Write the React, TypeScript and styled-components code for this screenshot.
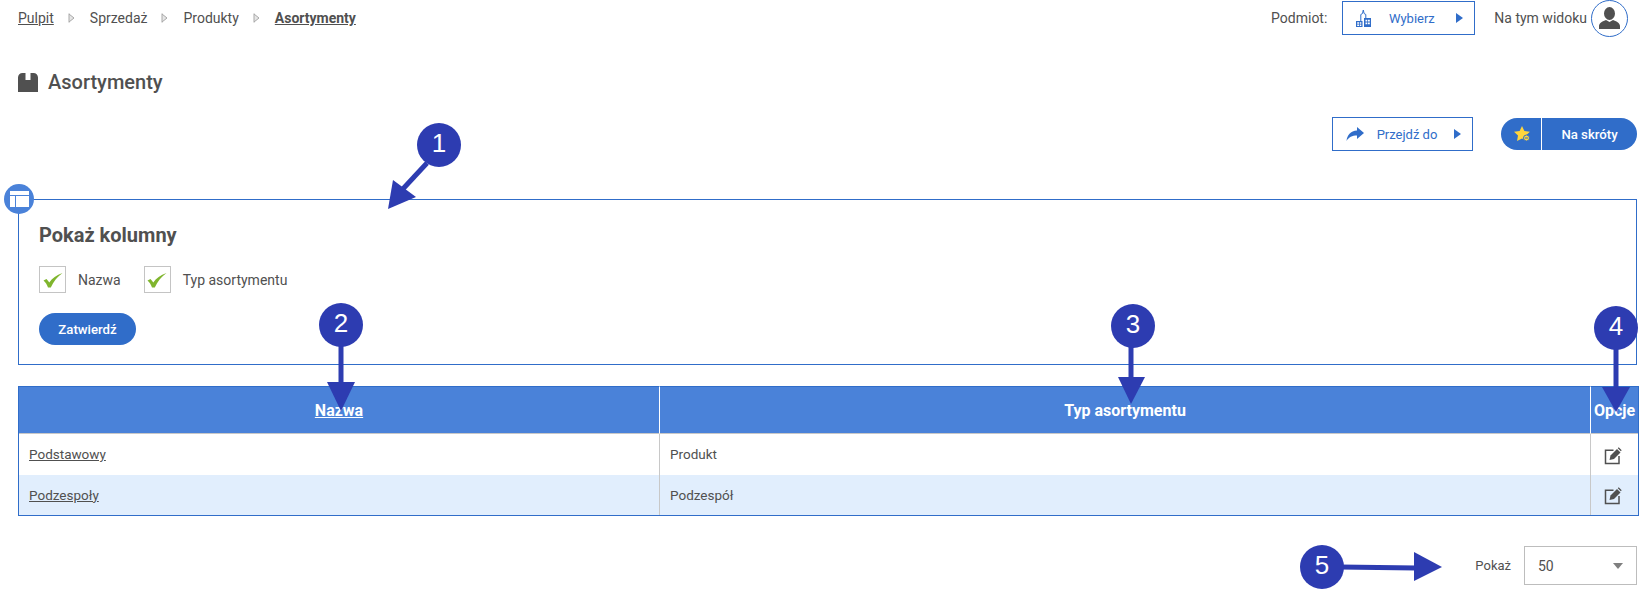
import React from "react";
import styled, { createGlobalStyle } from "styled-components";

const Global = createGlobalStyle`
  html, body { margin: 0; padding: 0; background: #fff; }
  body { font-family: Roboto, "Liberation Sans", sans-serif; color: #505050; font-size: 14px; }
  * { box-sizing: border-box; }
`;

const BLUE = "#306dc9";
const TEXT = "#505050";

const Page = styled.div`
  position: relative;
  width: 1648px;
  height: 595px;
  overflow: hidden;
  padding: 0 11px 0 18px;
`;

const TopBar = styled.header`
  display: flex;
  align-items: center;
  justify-content: space-between;
  height: 36px;
  padding-right: 9px;
`;

const Crumbs = styled.nav`
  display: flex;
  align-items: center;
`;

const CrumbLink = styled.a<{ $current?: boolean; $plain?: boolean }>`
  font-size: 14px;
  font-weight: ${(p) => (p.$current ? 700 : 400)};
  text-decoration: ${(p) => (p.$plain ? "none" : "underline")};
  color: ${TEXT};
`;

const CrumbSep = styled.svg`
  width: 7px;
  height: 10px;
  margin: 0 15px 0 14px;
`;

const TopRight = styled.div`
  display: flex;
  align-items: center;
`;

const TopLabel = styled.span<{ $gap: number }>`
  font-size: 14px;
  margin-right: ${(p) => p.$gap}px;
`;

const OutlineButton = styled.button<{ $w: number; $mr?: number }>`
  display: flex;
  align-items: center;
  width: ${(p) => p.$w}px;
  height: 34px;
  margin-right: ${(p) => p.$mr ?? 0}px;
  padding: 0 11px 0 13px;
  background: #fff;
  border: 1.5px solid ${BLUE};
  color: ${BLUE};
  font: 400 13px Roboto, sans-serif;
`;

const ButtonLabel = styled.span`
  flex: 1;
  padding-right: 4px;
  text-align: center;
  white-space: nowrap;
`;

const Avatar = styled.div`
  width: 37px;
  height: 37px;
  margin-left: 4px;
  border: 1px solid ${BLUE};
  border-radius: 50%;
  display: flex;
  align-items: center;
  justify-content: center;
`;

const TitleRow = styled.div`
  display: flex;
  align-items: center;
  gap: 10px;
  height: 24px;
  margin-top: 34px;
`;

const PageTitle = styled.h1`
  margin: 0;
  font-size: 20px;
  font-weight: 500;
  color: ${TEXT};
`;

const Actions = styled.div`
  display: flex;
  justify-content: flex-end;
  align-items: center;
  height: 34px;
  margin-top: 23px;
`;

const Shortcut = styled.button`
  display: flex;
  align-items: stretch;
  width: 136px;
  height: 32px;
  padding: 0;
  border: 0;
  border-radius: 16px;
  background: ${BLUE};
  color: #fff;
  font: 500 13.2px Roboto, sans-serif;
`;

const ShortcutIcon = styled.span`
  width: 41px;
  display: flex;
  align-items: center;
  justify-content: center;
  padding-left: 3px;
  border-right: 1px solid #fff;
`;

const ShortcutText = styled.span`
  flex: 1;
  align-self: center;
  text-align: center;
`;

const Panel = styled.section`
  position: relative;
  height: 166px;
  margin-top: 48px;
  padding: 24px 20px 0 20px;
  border: 1px solid ${BLUE};
`;

const PanelBadge = styled.div`
  position: absolute;
  left: -15px;
  top: -16px;
  width: 30px;
  height: 30px;
  border-radius: 50%;
  background: #4a82d9;
  display: flex;
  align-items: center;
  justify-content: center;
`;

const PanelTitle = styled.h2`
  margin: 0;
  font-size: 20px;
  line-height: 22px;
  font-weight: 700;
  color: ${TEXT};
`;

const CheckRow = styled.div`
  display: flex;
  align-items: center;
  margin-top: 20px;
`;

const CheckItem = styled.label`
  display: flex;
  align-items: center;
  margin-right: 23px;
  font-size: 14px;
`;

const CheckBox = styled.span`
  width: 27px;
  height: 27px;
  margin-right: 12px;
  border: 1px solid #c4c4c4;
  display: flex;
  align-items: center;
  justify-content: center;
`;

const Submit = styled.button`
  display: block;
  width: 97px;
  height: 32px;
  margin-top: 20px;
  border: 0;
  border-radius: 16px;
  background: ${BLUE};
  color: #fff;
  font: 500 13.2px Roboto, sans-serif;
`;

const Table = styled.table`
  width: 1619px;
  margin-top: 21px;
  border-collapse: separate;
  border-spacing: 0;
  table-layout: fixed;
  border-bottom: 1.5px solid ${BLUE};
  border-left: 1px solid ${BLUE};
  border-right: 1px solid ${BLUE};
`;

const HeadCell = styled.th<{ $w: number }>`
  width: ${(p) => p.$w}px;
  height: 48px;
  padding: 0;
  background: #4a82d9;
  border-top: 1px solid ${BLUE};
  border-bottom: 1.5px solid #c8c8c8;
  border-right: 1px solid #fff;
  color: #fff;
  font-size: 16px;
  font-weight: 700;
  text-align: center;
  &:last-child { border-right: 0; }
`;

const HeadLink = styled.a`
  color: #fff;
  text-decoration: underline;
`;

const Row = styled.tr<{ $alt?: boolean }>`
  height: ${(p) => (p.$alt ? 40 : 41)}px;
  background: ${(p) => (p.$alt ? "#e1eefd" : "#fff")};
`;

const Cell = styled.td`
  padding: 0 10px 1px;
  font-size: 13.5px;
  text-align: left;
  border-right: 1px solid #c8c8c8;
  &:last-child { border-right: 0; padding: 0; }
`;

const RowLink = styled.a`
  color: ${TEXT};
  text-decoration: underline;
`;

const EditGlyph = styled.svg`
  display: block;
  width: 18px;
  height: 18px;
  margin: 2px 0 0 13px;
`;

const Footer = styled.div`
  display: flex;
  justify-content: flex-end;
  align-items: center;
  margin-top: 30px;
`;

const FooterLabel = styled.span`
  font-size: 13px;
  margin-right: 13px;
`;

const PageSize = styled.div`
  width: 113px;
  height: 39px;
  padding: 0 13px;
  border: 1px solid #bdbdbd;
  display: flex;
  align-items: center;
  justify-content: space-between;
  font-size: 14px;
`;

const SelectCaret = styled.span`
  width: 0;
  height: 0;
  border-left: 5px solid transparent;
  border-right: 5px solid transparent;
  border-top: 6px solid #7f7f7f;
`;

const Arrows = styled.svg`
  position: absolute;
  left: 0;
  top: 0;
  width: 1648px;
  height: 595px;
  pointer-events: none;
`;

const Callout = styled.div<{ $x: number; $y: number }>`
  position: absolute;
  left: ${(p) => p.$x - 22}px;
  top: ${(p) => p.$y - 22}px;
  width: 44px;
  height: 44px;
  padding-bottom: 3px;
  border-radius: 50%;
  background: #2d3cb1;
  color: #fff;
  font: 400 26px "Liberation Sans", Arial, sans-serif;
  display: flex;
  align-items: center;
  justify-content: center;
`;

const Sep = () => (
  <CrumbSep viewBox="0 0 7 10">
    <path d="M1 .5v9M1 1l5 4-5 4" fill="#e6e6e6" stroke="#a8a8a8" strokeWidth="1" />
  </CrumbSep>
);

const Play = () => (
  <svg width="7" height="10" viewBox="0 0 7 10"><path d="M0 0l7 5-7 5z" fill={BLUE} /></svg>
);

const Check = () => (
  <svg width="20" height="16" viewBox="0 0 20 16">
    <path d="M.5 8.500l3-1.500c1 1 2 2.200 2.800 3.500C9 6.500 13.500 2.800 19.500 1 14.500 4.500 10.500 9.500 7.800 15.500H5C4 12.500 2.500 10.300.5 8.500z" fill="#7fb52d" />
  </svg>
);

const EditIcon = () => (
  <EditGlyph viewBox="0 0 18 18">
    <path d="M9.500 3.200H1.500v13.300H15V9" fill="none" stroke={TEXT} strokeWidth="1.500" />
    <path d="M5.500 13l1-4.500 6.500-6.500 3.500 3.500L10 12z" fill={TEXT} />
    <path d="M13.800 1.200l.9-.9 3 3-.9.900z" fill={TEXT} />
  </EditGlyph>
);

export default function App() {
  return (
    <Page>
      <Global />
      <TopBar>
        <Crumbs>
          <CrumbLink>Pulpit</CrumbLink>
          <Sep />
          <CrumbLink $plain>Sprzedaż</CrumbLink>
          <Sep />
          <CrumbLink $plain>Produkty</CrumbLink>
          <Sep />
          <CrumbLink $current>Asortymenty</CrumbLink>
        </Crumbs>
        <TopRight>
          <TopLabel $gap={15}>Podmiot:</TopLabel>
          <OutlineButton $w={133} $mr={19}>
            <svg width="15" height="17" viewBox="0 0 15 17">
              <path d="M4.800 11V4.500L6.500 3.500 7.300 0l.8 3.500 1.700 1V8" fill="none" stroke={BLUE} strokeWidth="1" />
              <path d="M0 11h6.500v6H0zM8 8h7v9H8z" fill={BLUE} />
              <path d="M1.200 12.200h1.800v1.500H1.200zM3.800 12.200h1.500v1.500H3.800zM1.200 14.500h1.800V16H1.200zM3.800 14.500h1.500V16H3.800zM9.500 9.800h1.800v1.800H9.500zM12 9.800h1.800v1.800H12zM9.500 12.500h1.800v1.800H9.500zM12 12.500h1.800v1.800H12z" fill="#fff" />
            </svg>
            <ButtonLabel>Wybierz</ButtonLabel>
            <Play />
          </OutlineButton>
          <TopLabel $gap={0}>Na tym widoku</TopLabel>
          <Avatar>
            <svg width="21" height="22" viewBox="0 0 21 22">
              <ellipse cx="10.500" cy="6.500" rx="5.500" ry="6.500" fill={TEXT} />
              <path d="M0 22v-3c0-3 4-5 7-6l3.500 2 3.500-2c3 1 7 3 7 6v3z" fill={TEXT} />
            </svg>
          </Avatar>
        </TopRight>
      </TopBar>

      <TitleRow>
        <svg width="20" height="20" viewBox="0 0 20 20">
          <path d="M0 20V5.500C0 3 2 1 4.500 1H7.500V8H12.500V1H15.500C18 1 20 3 20 5.500V20z" fill={TEXT} />
        </svg>
        <PageTitle>Asortymenty</PageTitle>
      </TitleRow>

      <Actions>
        <OutlineButton $w={141} $mr={28}>
          <svg width="18" height="14" viewBox="0 0 18 14">
            <path d="M11 0l7 6-7 6V8.500C6 8.500 3 10 .5 14 1 8 4.500 4 11 3.500z" fill={BLUE} />
          </svg>
          <ButtonLabel>Przejdź do</ButtonLabel>
          <Play />
        </OutlineButton>
        <Shortcut>
          <ShortcutIcon>
            <svg width="17" height="16" viewBox="0 0 17 16">
              <path d="M8 0l2.400 5 5.500.7-4 3.800 1 5.500L8 12.400 3 15l1-5.500-4-3.800L5.600 5z" fill="#ffd53d" />
              <circle cx="12.500" cy="12" r="3" fill="#ffd53d" stroke={BLUE} strokeWidth="1" />
              <path d="M11 12h3" stroke={BLUE} strokeWidth="1" />
            </svg>
          </ShortcutIcon>
          <ShortcutText>Na skróty</ShortcutText>
        </Shortcut>
      </Actions>

      <Panel>
        <PanelBadge>
          <svg width="19" height="16" viewBox="0 0 19 16">
            <path d="M0 0h19v16H0z" fill="#fff" />
            <path d="M0 4.500h19M5.500 4.500V16" stroke="#4a82d9" strokeWidth="1" />
          </svg>
        </PanelBadge>
        <PanelTitle>Pokaż kolumny</PanelTitle>
        <CheckRow>
          <CheckItem>
            <CheckBox><Check /></CheckBox>
            Nazwa
          </CheckItem>
          <CheckItem>
            <CheckBox><Check /></CheckBox>
            Typ asortymentu
          </CheckItem>
        </CheckRow>
        <Submit>Zatwierdź</Submit>
      </Panel>

      <Table>
        <thead>
          <tr>
            <HeadCell $w={641}><HeadLink>Nazwa</HeadLink></HeadCell>
            <HeadCell $w={931}>Typ asortymentu</HeadCell>
            <HeadCell $w={47}>Opcje</HeadCell>
          </tr>
        </thead>
        <tbody>
          <Row>
            <Cell><RowLink>Podstawowy</RowLink></Cell>
            <Cell>Produkt</Cell>
            <Cell><EditIcon /></Cell>
          </Row>
          <Row $alt>
            <Cell><RowLink>Podzespoły</RowLink></Cell>
            <Cell>Podzespół</Cell>
            <Cell><EditIcon /></Cell>
          </Row>
        </tbody>
      </Table>

      <Footer>
        <FooterLabel>Pokaż</FooterLabel>
        <PageSize>
          50
          <SelectCaret />
        </PageSize>
      </Footer>

      <Arrows viewBox="0 0 1648 595">
        <g stroke="#2d3cb1" strokeWidth="5" fill="#2d3cb1">
          <path d="M427 163L401 191" />
          <path d="M341 345V384" />
          <path d="M1131 345V382" />
          <path d="M1616 348V390" />
          <path d="M1340 567L1416 568" />
        </g>
        <g fill="#2d3cb1">
          <path d="M388 209L393 180L416 197z" />
          <path d="M341 411L327 382H355z" />
          <path d="M1131 404L1118 377H1145z" />
          <path d="M1616 412L1602 387H1630z" />
          <path d="M1442 567L1414 552V581z" />
        </g>
      </Arrows>
      <Callout $x={439} $y={145}>1</Callout>
      <Callout $x={341} $y={325}>2</Callout>
      <Callout $x={1133} $y={326}>3</Callout>
      <Callout $x={1616} $y={328}>4</Callout>
      <Callout $x={1322} $y={567}>5</Callout>
    </Page>
  );
}
